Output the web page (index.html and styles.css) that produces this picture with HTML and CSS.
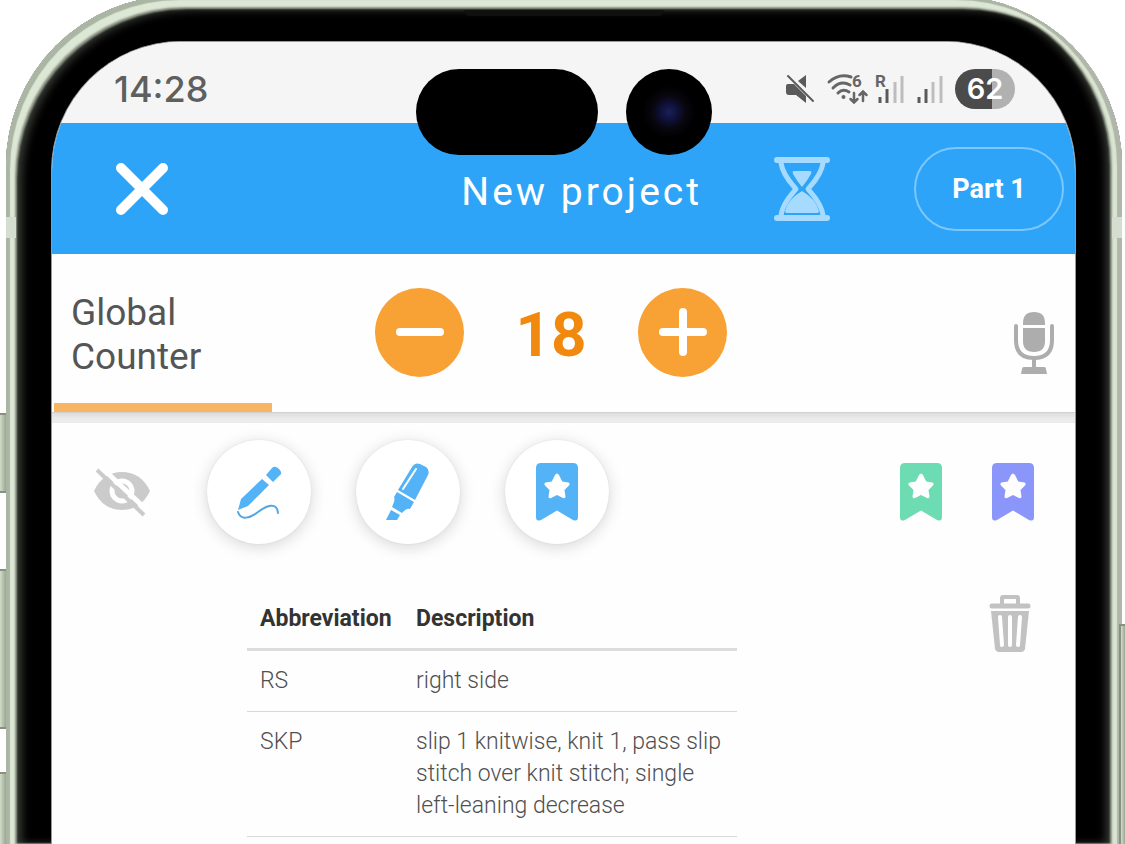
FILE: index.html
```html
<!DOCTYPE html>
<html lang="en">
<head>
<meta charset="utf-8">
<meta name="viewport" content="width=device-width, initial-scale=1">
<title>New project</title>
<link rel="stylesheet" href="styles.css">
</head>
<body>
<svg class="symbols" aria-hidden="true">
  <symbol id="bookmark" viewBox="0 0 42 58">
    <path fill="currentColor" fill-rule="evenodd" d="M5 0H37Q42 0 42 5V54Q42 59 37 57L21 47.500L5 57Q0 59 0 54V5Q0 0 5 0ZM19 12L15.800 18.500L9.500 19.500Q7.500 20.500 9 22.500L13.500 27L12.500 33.500Q12.500 35.800 15 35L21 32L27 35Q29.500 35.800 29.500 33.500L28.500 27L33 22.500Q34.500 20.500 32.500 19.500L26.200 18.500L23 12Q21 9 19 12Z"/>
  </symbol>
</svg>
<div class="phone">
  <span class="side-key key-action"></span>
  <span class="side-key key-up"></span>
  <span class="side-key key-down"></span>
  <span class="side-key key-power"></span>
  <span class="band band-left"></span>
  <span class="band band-right"></span>
  <span class="earpiece"></span>
  <div class="screen">
    <div class="cutouts">
      <span class="cutout-pill"></span>
      <span class="cutout-camera"></span>
    </div>
    <div class="status">
      <span class="time">14:28</span>
      <div class="status-icons">
        <svg class="muted" width="30" height="30" viewBox="0 0 30 30" aria-label="Muted">
          <path fill="#5a5a5a" d="M1 12Q1 10 3 10H9L21 22V29L11 21H4Q1 21 1 18ZM21 1V14L13 7Z"/>
          <path stroke="#5a5a5a" stroke-width="2" stroke-linecap="round" d="M3 2L28 27"/>
        </svg>
        <svg class="wifi" width="42" height="32" viewBox="0 0 42 32" aria-label="Wi-Fi 6">
          <g fill="none" stroke="#666" stroke-width="3" stroke-linecap="round">
            <path d="M2 9Q12 0 24 4M6 15Q14 7 23 12M11 20Q16 15 22 19"/>
            <path stroke-width="2.500" d="M27 20V29M23.500 26L27 29.500L30.500 26M36 28V19M32.500 22L36 18.500L39.500 22"/>
          </g>
          <circle cx="16.500" cy="24" r="2" fill="#666"/>
          <text x="25" y="14" class="tiny">6</text>
        </svg>
        <svg class="signal" width="30" height="30" viewBox="0 0 30 30" aria-label="Roaming signal">
          <text x="0" y="13" class="tiny">R</text>
          <path stroke="#5a5a5a" stroke-width="3" d="M5 23V29M12 15V29"/>
          <path stroke="#bdbdbd" stroke-width="3" d="M20 8V29M27 2V29"/>
        </svg>
        <svg class="signal2" width="26" height="30" viewBox="0 0 26 30" aria-label="Signal">
          <path stroke="#5a5a5a" stroke-width="3" d="M2 23V29M9 15V29"/>
          <path stroke="#bdbdbd" stroke-width="3" d="M16 8V29M24 2V29"/>
        </svg>
        <span class="battery">62</span>
      </div>
    </div>

    <header class="appbar">
      <button class="icon-button close" aria-label="Close">
        <svg width="54" height="54" viewBox="0 0 54 54"><path stroke="#fff" stroke-width="10" stroke-linecap="round" d="M6 6L48 48M48 6L6 48"/></svg>
      </button>
      <h1 class="title">New project</h1>
      <button class="icon-button timer" aria-label="Timer">
        <svg width="56" height="64" viewBox="0 0 56 64">
          <g fill="none" stroke="#a6dbff" stroke-linecap="round" stroke-linejoin="round">
            <path stroke-width="6" d="M3 3H53M3 61H53"/>
            <path stroke-width="5" d="M7 6C9 19 18 27 22 32C18 37 9 45 7 58M49 6C47 19 38 27 34 32C38 37 47 45 49 58"/>
          </g>
          <path fill="#a6dbff" d="M20 14H36Q38 14 37 17Q33 24 28 30Q23 24 19 17Q18 14 20 14ZM28 34Q42 42 45 54Q45 56 43 56H13Q11 56 11 54Q14 42 28 34Z"/>
        </svg>
      </button>
      <button class="part">Part 1</button>
    </header>

    <section class="counter">
      <h2 class="counter-name">Global<br>Counter</h2>
      <div class="stepper">
        <button class="round" aria-label="Decrease">
          <svg width="50" height="50" viewBox="0 0 50 50"><path stroke="#fff" stroke-width="8" stroke-linecap="round" d="M5 25H45"/></svg>
        </button>
        <output class="count">18</output>
        <button class="round" aria-label="Increase">
          <svg width="50" height="50" viewBox="0 0 50 50"><path stroke="#fff" stroke-width="8" stroke-linecap="round" d="M5 25H45M25 5V45"/></svg>
        </button>
      </div>
      <button class="icon-button mic" aria-label="Voice control">
        <svg width="42" height="64" viewBox="0 0 42 64">
          <path fill="#adadad" d="M10 14V12Q10 1 21 1T32 12V14ZM10 17H32V30Q32 41 21 41T10 30ZM19 48H23V56H31Q33 56 33 58L34 63H8L9 58Q9 56 11 56H19Z"/>
          <path fill="none" stroke="#adadad" stroke-width="4" stroke-linecap="round" d="M3 15V29Q3 47 21 47T39 29V15"/>
        </svg>
      </button>
      <div class="progress"></div>
    </section>

    <div class="tools">
      <button class="icon-button eye" aria-label="Hide markings">
        <svg width="58" height="50" viewBox="0 0 58 50">
          <path fill="#cbcbcb" d="M1 24Q10 5 29 5T57 24Q48 43 29 43T1 24Z"/>
          <circle cx="29" cy="24" r="10" fill="none" stroke="#fff" stroke-width="5"/>
          <path stroke="#fff" stroke-width="5" d="M8 0L56 45"/>
          <path stroke="#cbcbcb" stroke-width="4" d="M4 3L51 48"/>
        </svg>
      </button>
      <button class="tool" aria-label="Pen">
        <svg width="46" height="54" viewBox="0 0 46 54">
          <path fill="#54b2f7" d="M26 14L33 20L12 41L2 45L5 34ZM30 10L36 3Q39 0 43 4T44 10L37 17Z"/>
          <path fill="none" stroke="#54a6de" stroke-width="2" stroke-linecap="round" d="M2 47C5 56 14 53 22 47S41 36 42 48"/>
        </svg>
      </button>
      <button class="tool" aria-label="Highlighter">
        <svg width="44" height="58" viewBox="0 0 44 58">
          <path fill="#54b2f7" d="M12 27L26 4Q29 -1 34 1L40 4Q44 7 42 12L29 37ZM11 29L28 39L24 46Q21 45 18 48L16 50L6 44L8 39Q9 36 8 34ZM5 47L14 52L11 57H0Z"/>
          <path stroke="#fff" stroke-width="2" stroke-linecap="round" d="M30 6L17 26"/>
        </svg>
      </button>
      <button class="tool" aria-label="Add bookmark">
        <svg class="mark mark-blue"><use href="#bookmark"/></svg>
      </button>
      <div class="marks">
        <button class="icon-button" aria-label="Green bookmark"><svg class="mark mark-green"><use href="#bookmark"/></svg></button>
        <button class="icon-button" aria-label="Purple bookmark"><svg class="mark mark-purple"><use href="#bookmark"/></svg></button>
      </div>
    </div>

    <main class="document">
      <table class="glossary">
        <thead>
          <tr><th class="abbr">Abbreviation</th><th>Description</th></tr>
        </thead>
        <tbody>
          <tr><td>RS</td><td>right side</td></tr>
          <tr><td>SKP</td><td>slip 1 knitwise, knit 1, pass slip stitch over knit stitch; single left-leaning decrease</td></tr>
        </tbody>
      </table>
      <button class="icon-button trash" aria-label="Delete">
        <svg width="42" height="58" viewBox="0 0 42 58">
          <path fill="none" stroke="#c2c2c2" stroke-width="4" d="M13 9V3Q13 2 14 2H28Q29 2 29 3V9"/>
          <path stroke="#c2c2c2" stroke-width="5" stroke-linecap="round" d="M3 11H39"/>
          <path fill="#c2c2c2" d="M2 16H40L36 54Q35 57 32 57H10Q7 57 6 54Z"/>
          <path stroke="#fff" stroke-width="4" stroke-linecap="round" d="M11 22L13 50M21 22V50M31 22L29 50"/>
        </svg>
      </button>
    </main>
  </div>
</div>
</body>
</html>
```
FILE: styles.css
```css
* {
  box-sizing: border-box;
}

body {
  margin: 0;
  height: 100vh;
  overflow: hidden;
  background: #fff;
  font-family: Roboto, "Liberation Sans", sans-serif;
}

button {
  border: 0;
  padding: 0;
  background: none;
  font: inherit;
  color: inherit;
  cursor: pointer;
}

svg {
  display: block;
  overflow: visible;
}

.symbols {
  position: absolute;
  width: 0;
  height: 0;
}

/* Phone body */
.phone {
  position: relative;
  margin: -4px 3px 0 6px;
  padding: 45px 46px 0 45px;
  min-height: calc(100vh + 4px);
  border-radius: 170px 170px 0 0;
  background: #000;
  box-shadow:
    inset 4px 4px 1px #aab5a3,
    inset -5px 0 1px #b0b7aa,
    inset 9px 11px 2px #dde7d5,
    inset -10px 0 2px #dae5d1,
    inset 11px 13px 2px #8c9485,
    inset -12px 0 2px #8c9485,
    inset 16px 14px 8px #363934,
    inset -16px 0 8px #363934;
}

.side-key {
  position: absolute;
  left: -8px;
  width: 8px;
  border: 2px solid #88917f;
  border-right: 0;
  background: linear-gradient(90deg, #d3ddca, #9ba792);
}

.key-action {
  top: 417px;
  height: 80px;
}

.key-up {
  top: 573px;
  height: 160px;
}

.key-down {
  top: 776px;
  bottom: 0;
  border-bottom: 0;
}

.key-power {
  left: auto;
  right: -3px;
  top: 628px;
  bottom: 0;
  width: 6px;
  border-bottom: 0;
}

.band {
  position: absolute;
  top: 221px;
  width: 10px;
  height: 21px;
  background: #d5ddd0;
}

.band-left {
  left: 0;
}

.band-right {
  right: 0;
}

.earpiece {
  position: absolute;
  top: 14px;
  left: 41%;
  width: 18%;
  height: 6px;
  border-radius: 0 0 6px 6px;
  background: #10110f;
}

.screen {
  position: relative;
  min-height: calc(100vh - 41px);
  overflow: hidden;
  border: 1px solid #999;
  border-bottom: 0;
  border-radius: 130px 130px 0 0;
  background: #fefefe;
}

.cutouts {
  position: absolute;
  top: 27px;
  left: 0;
  right: 0;
  display: flex;
  justify-content: center;
  gap: 28px;
}

.cutout-pill,
.cutout-camera {
  width: 86px;
  height: 86px;
  border-radius: 43px;
  background: #000;
}

.cutout-pill {
  width: 182px;
}

.cutout-camera {
  background: radial-gradient(circle, #1b1f58 0, #0d0f33 10px, #0a0710 16px, #000 26px);
}

/* Status bar */
.status {
  display: flex;
  align-items: center;
  justify-content: space-between;
  height: 81px;
  padding: 12px 60px 0 62px;
  background: #f5f5f5;
}

.time {
  font: 500 36px/40px Inter, Roboto, sans-serif;
  color: #5f5f5f;
}

.status-icons {
  display: flex;
  align-items: center;
  gap: 12px;
}

.wifi {
  margin-right: -6px;
}

.tiny {
  font: 700 17px Roboto, sans-serif;
  fill: #666;
}

.battery {
  width: 60px;
  border-radius: 20px;
  background: linear-gradient(90deg, #4b4b4b 62%, #b1b1b1 62%);
  font: 600 29px/40px Inter, Roboto, sans-serif;
  text-align: center;
  color: #fff;
}

/* App bar */
.appbar {
  display: flex;
  align-items: center;
  height: 131px;
  padding: 0 11px 0 63px;
  background: #2da4f7;
  color: #fff;
}

.title {
  margin: 0 72px 0 auto;
  padding-top: 6px;
  font-size: 39px;
  font-weight: 400;
  line-height: 48px;
  letter-spacing: 3px;
}

.part {
  width: 150px;
  height: 84px;
  margin-left: 84px;
  border: 2px solid #7cc7fb;
  border-radius: 42px;
  font-size: 27px;
  font-weight: 700;
}

/* Counter */
.counter {
  position: relative;
  display: grid;
  grid-template-columns: 1fr auto 1fr;
  align-items: center;
  height: 158px;
  padding: 0 20px 0 19px;
  background: #fefefe;
  box-shadow: 0 1px 0 #d2d2d2, 0 4px 4px #dcdcdc, 0 11px 0 #ececec;
}

.counter-name {
  margin: 0;
  padding-top: 4px;
  font-size: 37px;
  font-weight: 400;
  line-height: 44px;
  color: #555;
}

.stepper {
  display: flex;
  align-items: center;
  margin-right: 24px;
  padding-bottom: 2px;
}

.round {
  display: grid;
  place-items: center;
  width: 89px;
  height: 89px;
  border-radius: 50%;
  background: #f8a135;
}

.count {
  width: 174px;
  padding-top: 6px;
  font-size: 62px;
  font-weight: 700;
  line-height: 72px;
  text-align: center;
  color: #f2890f;
}

.mic {
  justify-self: end;
  padding-top: 20px;
}

.progress {
  position: absolute;
  left: 2px;
  bottom: 0;
  width: 218px;
  height: 9px;
  background: #f8b564;
}

/* Tools */
.tools {
  display: flex;
  align-items: center;
  gap: 45px;
  padding: 28px 41px 0 41px;
}

.eye {
  margin-right: 11px;
}

.tool {
  display: grid;
  place-items: center;
  width: 104px;
  height: 104px;
  border-radius: 50%;
  background: #fff;
  box-shadow: 0 3px 16px rgba(0, 0, 0, 0.16), 0 0 2px rgba(0, 0, 0, 0.08);
}

.mark {
  width: 42px;
  height: 58px;
}

.mark-blue {
  color: #54b2f7;
}

.mark-green {
  color: #6edcb2;
}

.mark-purple {
  color: #8b96fb;
}

.marks {
  display: flex;
  gap: 50px;
  margin-left: auto;
}

/* Pattern document */
.document {
  display: flex;
  align-items: flex-start;
  justify-content: space-between;
  padding: 44px 44px 0 195px;
}

.glossary {
  flex: 0 1 490px;
  width: 490px;
  border-collapse: collapse;
  font-size: 23px;
  font-weight: 300;
  line-height: 32px;
  text-align: left;
  color: #505050;
}

.glossary th {
  padding: 15px 13px 13px;
  border-bottom: 3px solid #dcdcdc;
  font-weight: 700;
  color: #333;
}

.glossary td {
  padding: 14px 13px;
  border-bottom: 1px solid #d8d8d8;
  vertical-align: top;
}

.glossary .abbr {
  width: 156px;
  padding-right: 10px;
}

.trash {
  padding-top: 7px;
}
```
